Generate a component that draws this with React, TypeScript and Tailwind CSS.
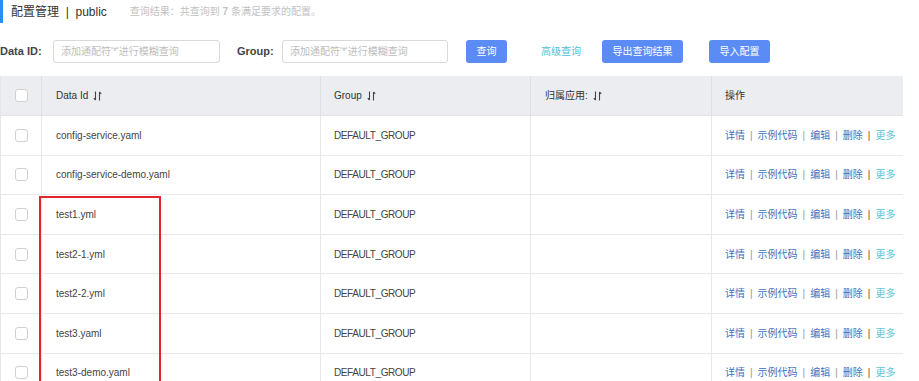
import { Fragment } from "react";

const rows = [
  "config-service.yaml",
  "config-service-demo.yaml",
  "test1.yml",
  "test2-1.yml",
  "test2-2.yml",
  "test3.yaml",
  "test3-demo.yaml",
];

const cols = "grid grid-cols-[41px_279px_210px_181px_191px]";

function Checkbox() {
  return <span className="block w-[13px] h-[13px] rounded-[3px] border border-[#d0d0d0] bg-white" />;
}

function SortIcon() {
  return (
    <svg width="9" height="10" viewBox="0 0 9 10" className="ml-[5px]" fill="none" stroke="#444" strokeWidth="1.1">
      <path d="M2.5 0.5v8.5M0.8 7.2l1.7 1.8" />
      <path d="M6.5 9.5V1M6.5 1l1.7 1.8" />
    </svg>
  );
}

function Actions() {
  const sep = "mx-[5px] text-[#999]";
  return (
    <div className="flex items-center text-[10px] text-[#3a72bf]">
      <span>详情</span>
      <span className={sep}>|</span>
      <span>示例代码</span>
      <span className={sep}>|</span>
      <span>编辑</span>
      <span className={sep}>|</span>
      <span>删除</span>
      <span className="mx-[5px] text-[#8a3b2a]">|</span>
      <span className="text-[#5cc6d6]">更多</span>
    </div>
  );
}

export default function App() {
  return (
    <div className="relative w-[919px] h-[381px] overflow-hidden bg-white text-[#333] font-['Liberation_Sans','Noto_Sans_CJK_SC',sans-serif]">
      {/* title */}
      <div className="flex items-center h-[23px]">
        <span className="w-[3px] h-[23px] bg-[#2d8ef0]" />
        <span className="ml-[8px] text-[12px] text-[#333]">配置管理&nbsp;&nbsp;|&nbsp;&nbsp;public</span>
        <span className="ml-[23px] text-[10px] text-[#c2c2c2]">
          查询结果：共查询到 <b className="font-bold">7</b> 条满足要求的配置。
        </span>
      </div>

      {/* search */}
      <div className="flex items-center h-[23px] mt-[17px] text-[11px]">
        <span className="font-bold text-[#444] w-[53px]">Data ID:</span>
        <div className="w-[167px] h-[23px] border border-[#d9d9d9] rounded-[3px] pl-[7px] flex items-center text-[10px] text-[#bdbdbd]">
          添加通配符'*'进行模糊查询
        </div>
        <span className="font-bold text-[#444] ml-[17px] w-[45px]">Group:</span>
        <div className="w-[166px] h-[23px] border border-[#d9d9d9] rounded-[3px] pl-[7px] flex items-center text-[10px] text-[#bdbdbd]">
          添加通配符'*'进行模糊查询
        </div>
        <button className="ml-[18px] w-[41px] h-[23px] rounded-[3px] bg-[#5b8cf6] text-white text-[10px]">查询</button>
        <span className="ml-[34px] text-[10px] text-[#4cc3d6]">高级查询</span>
        <button className="ml-[21px] w-[81px] h-[23px] rounded-[3px] bg-[#5b8cf6] text-white text-[10px]">导出查询结果</button>
        <button className="ml-[26px] w-[61px] h-[23px] rounded-[3px] bg-[#5b8cf6] text-white text-[10px]">导入配置</button>
      </div>

      {/* table */}
      <div className="mt-[13px] w-[903px] border-l border-[#e6e6e6] text-[10px]">
        <div className={`${cols} h-[40px] bg-[#ebedf0] border-b border-[#e3e3e3]`}>
          <div className="flex items-center justify-center border-r border-[#dedfe2]">
            <Checkbox />
          </div>
          <div className="flex items-center pl-[14px] border-r border-[#dedfe2]">
            Data Id
            <SortIcon />
          </div>
          <div className="flex items-center pl-[13px] border-r border-[#dedfe2]">
            Group
            <SortIcon />
          </div>
          <div className="flex items-center pl-[14px] border-r border-[#dedfe2]">
            归属应用:
            <SortIcon />
          </div>
          <div className="flex items-center pl-[13px]">操作</div>
        </div>
        {rows.map((r) => (
          <Fragment key={r}>
            <div className={`${cols} h-[39.6px] border-b border-[#e8e8e8] text-[#444]`}>
              <div className="flex items-center justify-center border-r border-[#e8e8e8]">
                <Checkbox />
              </div>
              <div className="flex items-center pl-[14px] border-r border-[#e8e8e8]">{r}</div>
              <div className="flex items-center pl-[13px] tracking-[-0.4px] border-r border-[#e8e8e8]">DEFAULT_GROUP</div>
              <div className="border-r border-[#e8e8e8]" />
              <div className="flex items-center pl-[13px]">
                <Actions />
              </div>
            </div>
          </Fragment>
        ))}
      </div>

      {/* highlight */}
      <div className="absolute left-[39px] top-[196px] w-[122px] h-[200px] border-2 border-[#e2262f]" />
    </div>
  );
}
